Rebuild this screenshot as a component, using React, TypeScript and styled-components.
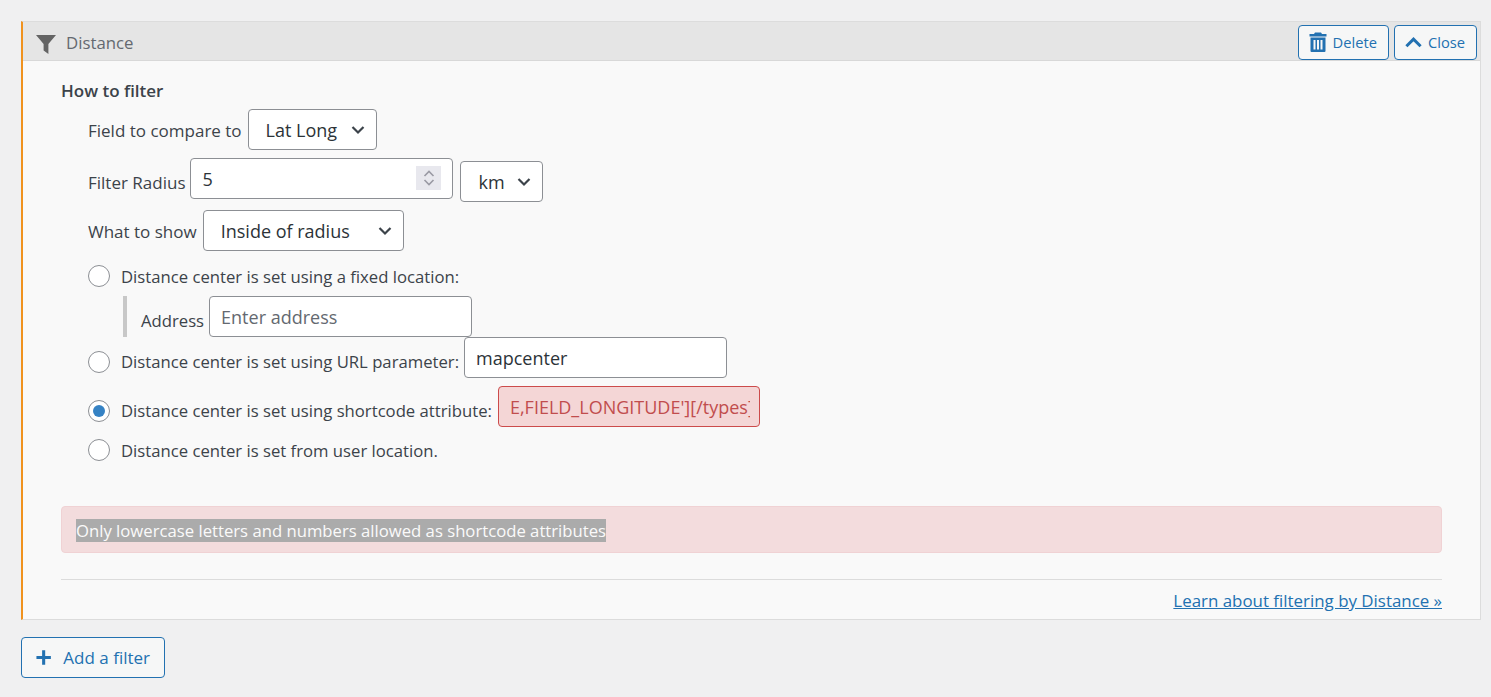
import styled, { createGlobalStyle } from 'styled-components';

const chevron =
  "url(\"data:image/svg+xml,%3Csvg xmlns='http://www.w3.org/2000/svg' width='16' height='16' viewBox='0 0 16 16'%3E%3Cpath d='M2.5 5 8 10.5 13.5 5' fill='none' stroke='%233c434a' stroke-width='2.2'/%3E%3C/svg%3E\")";

const GlobalStyle = createGlobalStyle`
  html, body {
    margin: 0;
    padding: 0;
    background: #f0f0f1;
  }
  body {
    font-family: 'Open Sans', 'Noto Sans', sans-serif;
    font-size: 16.7px;
    color: #3c434a;
  }
`;

const App = () => {
  return (
    <Page>
      <GlobalStyle />
      <Card>
        <CardHeader>
          <FilterIcon viewBox='0 0 20 20'>
            <path d='M0 1h20l-7.600 9v10l-4.800-3.600V10z' />
          </FilterIcon>
          <CardTitle>Distance</CardTitle>
          <HeaderButtons>
            <Button $left={10}>
              <svg width='18' height='20' viewBox='0 0 18 20' fill='currentColor'>
                <path d='M6 .5h6l1 1.500h4.500v2.500H.5V2H5zM1.500 5.500h15V19a1 1 0 0 1-1 1h-13a1 1 0 0 1-1-1zM4.500 8v9.500h2V8zM8 8v9.500h2V8zM11.500 8v9.500h2V8z' fillRule='evenodd' />
              </svg>
              Delete
            </Button>
            <Button $left={10}>
              <svg width='17' height='12' viewBox='0 0 18 12' fill='none' stroke='currentColor' strokeWidth='3.2'>
                <path d='M1.500 10.500 9 3l7.500 7.500' />
              </svg>
              Close
            </Button>
          </HeaderButtons>
        </CardHeader>
        <CardBody>
          <SectionTitle>How to filter</SectionTitle>
          <FieldRow $top={7} $height={41}>
            <FieldLabel $gap={6}>Field to compare to</FieldLabel>
            <Select $width={129} defaultValue='Lat Long'>
              <option>Lat Long</option>
            </Select>
          </FieldRow>
          <FieldRow $top={8} $height={44}>
            <FieldLabel $gap={5} $drop={4}>Filter Radius</FieldLabel>
            <SpinWrap>
              <Input $width={263} defaultValue='5' />
              <Spinner>
                <svg width='14' height='22' viewBox='0 0 14 22' fill='none' stroke='#9a9aa4' strokeWidth='1.6'>
                  <path d='M2.500 9 7 4.500 11.500 9M2.500 13 7 17.500 11.500 13' />
                </svg>
              </Spinner>
            </SpinWrap>
            <Select $width={83} $nudge={3} $left={7} defaultValue='km'>
              <option>km</option>
            </Select>
          </FieldRow>
          <FieldRow $top={8} $height={41}>
            <FieldLabel $gap={6}>What to show</FieldLabel>
            <Select $width={201} defaultValue='Inside of radius'>
              <option>Inside of radius</option>
            </Select>
          </FieldRow>
          <RadioRow $top={14} $height={22}>
            <Radio />
            <RadioLabel>Distance center is set using a fixed location:</RadioLabel>
          </RadioRow>
          <AddressRow>
            <AddressLabel>Address</AddressLabel>
            <Input $width={263} placeholder='Enter address' />
          </AddressRow>
          <RadioRow $top={0} $height={41}>
            <Radio $drop />
            <RadioLabel $drop $gap={5}>Distance center is set using URL parameter:</RadioLabel>
            <Input $width={263} defaultValue='mapcenter' />
          </RadioRow>
          <RadioRow $top={8} $height={41}>
            <Radio $checked $drop />
            <RadioLabel $drop>Distance center is set using shortcode attribute:</RadioLabel>
            <Input $width={262} $invalid defaultValue="E,FIELD_LONGITUDE'][/types]" />
          </RadioRow>
          <RadioRow $top={12} $height={22}>
            <Radio />
            <RadioLabel>Distance center is set from user location.</RadioLabel>
          </RadioRow>
          <Alert>
            <Selected>Only lowercase letters and numbers allowed as shortcode attributes</Selected>
          </Alert>
          <Divider />
          <LearnRow>
            <a href='#learn'>Learn about filtering by Distance »</a>
          </LearnRow>
        </CardBody>
      </Card>
      <AddButton>
        <svg width='17' height='17' viewBox='0 0 17 17' fill='currentColor'>
          <path d='M6.800.5h3.400v6.300h6.300v3.400h-6.300v6.300H6.800v-6.300H.5V6.800h6.300z' />
        </svg>
        Add a filter
      </AddButton>
    </Page>
  );
};

export default App;

const Page = styled.div`
  padding: 21px 10px 19px 21px;
`;

const Card = styled.section`
  border: 1px solid #dcdcdc;
  border-left: 2px solid #f0921e;
  background: #f9f9f9;
`;

const CardHeader = styled.header`
  height: 38px;
  background: #e5e5e5;
  border-bottom: 1px solid #d8d8d8;
  display: flex;
  align-items: center;
  padding-left: 13px;
`;

const FilterIcon = styled.svg`
  width: 20px;
  height: 20px;
  fill: #646464;
  margin-top: 5px;
`;

const CardTitle = styled.span`
  margin-left: 10px;
  padding-top: 2px;
  color: #646970;
  font-size: 16.8px;
`;

const HeaderButtons = styled.div`
  margin-left: auto;
  margin-right: 3px;
  display: flex;
  gap: 5px;
  margin-top: 2px;
`;

const Button = styled.button<{ $left: number }>`
  height: 35px;
  padding: 0 11px 0 ${({ $left }) => $left}px;
  display: flex;
  align-items: center;
  gap: 6px;
  border: 1px solid #2271b1;
  border-radius: 4px;
  background: #f6f7f7;
  color: #2271b1;
  font-family: inherit;
  font-size: 14.7px;
`;

const CardBody = styled.div`
  padding: 19px 38px 7px;
`;

const SectionTitle = styled.div`
  font-weight: 600;
  font-size: 17px;
  line-height: 22px;
`;

const FieldRow = styled.div<{ $top: number; $height: number }>`
  display: flex;
  align-items: flex-start;
  margin-top: ${({ $top }) => $top}px;
  height: ${({ $height }) => $height}px;
  padding-left: 27px;
`;

const FieldLabel = styled.label<{ $gap: number; $drop?: number }>`
  font-size: 17px;
  line-height: 41px;
  padding-top: ${({ $drop }) => $drop || 1}px;
  margin-right: ${({ $gap }) => $gap}px;
  white-space: nowrap;
  height: 41px;
`;

const Select = styled.select<{ $width: number; $nudge?: number; $left?: number }>`
  appearance: none;
  width: ${({ $width }) => $width}px;
  height: 41px;
  margin-top: ${({ $nudge }) => $nudge || 0}px;
  margin-left: ${({ $left }) => $left || 0}px;
  padding: 1px 32px 0 17px;
  border: 1px solid #8c8f94;
  border-radius: 4px;
  background: #fff ${chevron} no-repeat right 10px center;
  color: #2c3338;
  font-family: inherit;
  font-size: 18px;
`;

const Input = styled.input<{ $width: number; $invalid?: boolean }>`
  box-sizing: border-box;
  width: ${({ $width }) => $width}px;
  height: 41px;
  padding: 0 9px 0 11px;
  border: 1px solid ${({ $invalid }) => ($invalid ? '#cc4b4b' : '#8c8f94')};
  border-radius: 4px;
  background: ${({ $invalid }) => ($invalid ? '#f4d6d6' : '#fff')};
  color: ${({ $invalid }) => ($invalid ? '#c14d4d' : '#2c3338')};
  font-family: inherit;
  font-size: 18px;

  &::placeholder {
    color: #646970;
    opacity: 1;
  }
`;

const SpinWrap = styled.div`
  position: relative;
`;

const Spinner = styled.span`
  position: absolute;
  top: 8px;
  right: 12px;
  width: 25px;
  height: 24px;
  background: #e8e8ee;
  display: flex;
  align-items: center;
  justify-content: center;
`;

const RadioRow = styled.div<{ $top: number; $height: number }>`
  display: flex;
  align-items: center;
  margin-top: ${({ $top }) => $top}px;
  height: ${({ $height }) => $height}px;
  padding-left: 27px;
`;

const Radio = styled.span<{ $checked?: boolean; $drop?: boolean }>`
  box-sizing: border-box;
  width: 22px;
  height: 22px;
  flex: none;
  margin-top: ${({ $drop }) => ($drop ? 9 : 0)}px;
  border: 1px solid #8c8f94;
  border-radius: 50%;
  background: #fff;
  display: flex;
  align-items: center;
  justify-content: center;

  &::after {
    content: '';
    display: ${({ $checked }) => ($checked ? 'block' : 'none')};
    width: 12px;
    height: 12px;
    border-radius: 50%;
    background: #3582c4;
  }
`;

const RadioLabel = styled.span<{ $drop?: boolean; $gap?: number }>`
  margin-left: 11px;
  margin-right: ${({ $gap }) => $gap || 6}px;
  padding-top: ${({ $drop }) => ($drop ? 8 : 0)}px;
  white-space: nowrap;
`;

const AddressRow = styled.div`
  display: flex;
  align-items: flex-start;
  margin: 9px 0 0 62px;
  padding-left: 14px;
  border-left: 4px solid #c8c8c8;
  height: 41px;
`;

const AddressLabel = styled.label`
  line-height: 41px;
  padding-top: 4px;
  height: 41px;
  margin-right: 5px;
`;

const Alert = styled.div`
  box-sizing: border-box;
  height: 47px;
  margin-top: 45px;
  padding: 1px 14px 0;
  border: 1px solid #f0d2d4;
  border-radius: 4px;
  background: #f3dcdd;
  display: flex;
  align-items: center;
`;

const Selected = styled.span`
  background: #ababab;
  color: #fafafa;
  line-height: 23px;
`;

const Divider = styled.hr`
  margin: 26px 0 0;
  border: 0;
  border-top: 1px solid #dcdcdc;
`;

const LearnRow = styled.div`
  text-align: right;
  margin-top: 10px;
  line-height: 22px;
  font-size: 16.9px;

  a {
    color: #2271b1;
  }
`;

const AddButton = styled.button`
  margin-top: 17px;
  height: 41px;
  width: 144px;
  display: flex;
  align-items: center;
  gap: 12px;
  padding: 0 14px;
  border: 1px solid #2271b1;
  border-radius: 4px;
  background: #f6f7f7;
  color: #2271b1;
  font-family: inherit;
  font-size: 17px;
  white-space: nowrap;
`;
